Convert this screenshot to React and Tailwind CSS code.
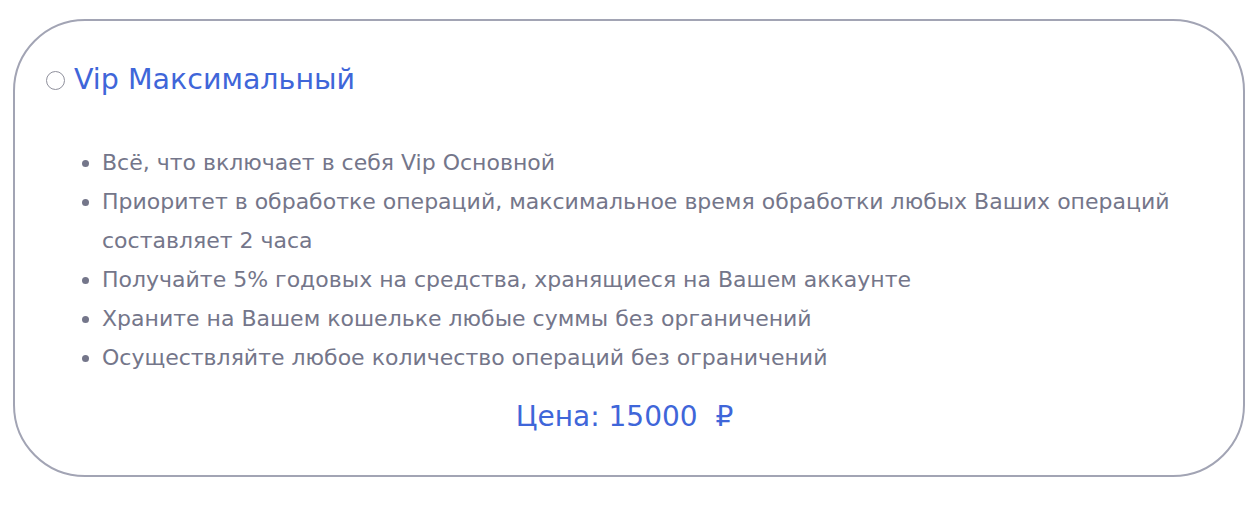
const FEATURES = [
  "Всё, что включает в себя Vip Основной",
  "Приоритет в обработке операций, максимальное время обработки любых Ваших операций составляет 2 часа",
  "Получайте 5% годовых на средства, хранящиеся на Вашем аккаунте",
  "Храните на Вашем кошельке любые суммы без органичений",
  "Осуществляйте любое количество операций без ограничений",
];

export default function App() {
  return (
    <div className="min-h-[509px] bg-white pl-[13px] pr-[14px] pt-[19px] font-['DejaVu_Sans',sans-serif]">
      <div className="h-[458px] rounded-[72px] border-2 border-[#a2a4b4] pl-[31px] pr-[40px] pt-[44px]">
        {/* plan title with radio */}
        <label className="flex items-center gap-[9px]">
          <span className="h-[19px] w-[19px] shrink-0 rounded-full border-[1.5px] border-[#8f909c]" />
          <span className="text-[28.5px] leading-[30px] text-[#3f66d9]">Vip Максимальный</span>
        </label>

        <ul className="mt-[48px] list-disc pl-[56px] text-[22px] leading-[39px] text-[#74768a] marker:text-[#74768a]">
          {FEATURES.map((f) => (
            <li key={f}>{f}</li>
          ))}
        </ul>

        <div className="mt-[25px] text-center text-[28px] leading-[30px] text-[#3f66d9]">
          Цена: 15000&nbsp; ₽
        </div>
      </div>
    </div>
  );
}
